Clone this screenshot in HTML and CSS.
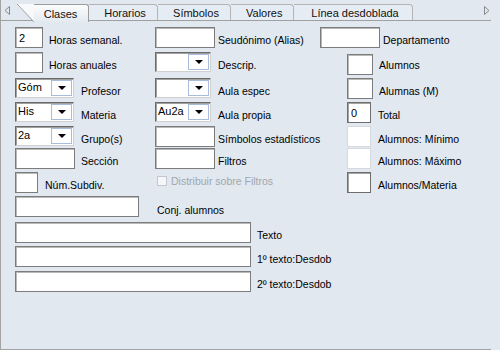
FILE: index.html
```html
<!DOCTYPE html>
<html lang="es">
  <head>
    <meta charset="UTF-8" />
    <title>Clases</title>
    <link rel="stylesheet" href="styles.css">
  </head>
  <body>
    <div class="ventana">
      <div class="pestanas">
        <span class="flecha izq"><svg width="7" height="9" viewBox="0 0 7 9"><path d="M5.5 0.5 L1 4.5 L5.5 8.5 Z" fill="none" stroke="#8a8a8a"/></svg></span>
        <div class="tab sel"><i class="sesgo"></i><span>Clases</span></div>
        <div class="tab">Horarios</div>
        <div class="tab">Símbolos</div>
        <div class="tab">Valores</div>
        <div class="tab">Línea desdoblada</div>
        <span class="flecha der"><svg width="7" height="9" viewBox="0 0 7 9"><path d="M1.5 0.5 L6 4.5 L1.5 8.5 Z" fill="none" stroke="#8a8a8a"/></svg></span>
      </div>

      <main class="form">
        <!-- fila 1 -->
        <div class="celda"><input class="fld w28" value="2"><label class="l6">Horas semanal.</label></div>
        <div class="celda"><input class="fld w60"><label>Seudónimo (Alias)</label></div>
        <div class="celda"><input class="fld w60"><label>Departamento</label></div>

        <!-- fila 2 -->
        <div class="celda"><input class="fld w28"><label class="l6">Horas anuales</label></div>
        <div class="celda"><div class="combo w56"><span class="cv"></span><span class="bot"></span></div><label class="l7">Descrip.</label></div>
        <div class="celda sangria baja2"><input class="fld w26"><label class="l6">Alumnos</label></div>

        <!-- fila 3 -->
        <div class="celda"><div class="combo w59"><span class="cv">Góm</span><span class="bot"></span></div><label class="l7">Profesor</label></div>
        <div class="celda"><div class="combo w56"><span class="cv"></span><span class="bot"></span></div><label class="l7">Aula espec</label></div>
        <div class="celda sangria"><input class="fld w26"><label class="l6">Alumnas (M)</label></div>

        <!-- fila 4 -->
        <div class="celda"><div class="combo w59"><span class="cv">His</span><span class="bot"></span></div><label class="l7">Materia</label></div>
        <div class="celda"><div class="combo w56"><span class="cv">Au2a</span><span class="bot"></span></div><label class="l7">Aula propia</label></div>
        <div class="celda sangria"><input class="fld w24 oscuro" value="0"><label class="l8">Total</label></div>

        <!-- fila 5 -->
        <div class="celda"><div class="combo w59"><span class="cv">2a</span><span class="bot"></span></div><label class="l7">Grupo(s)</label></div>
        <div class="celda"><input class="fld w60"><label>Símbolos estadísticos</label></div>
        <div class="celda sangria"><input class="fld w24 claro"><label class="l8">Alumnos: Mínimo</label></div>

        <!-- fila 6 -->
        <div class="celda"><input class="fld w60"><label class="l6">Sección</label></div>
        <div class="celda"><input class="fld w60"><label>Filtros</label></div>
        <div class="celda sangria"><input class="fld w24 claro"><label class="l8">Alumnos: Máximo</label></div>

        <!-- fila 7 -->
        <div class="celda"><input class="fld w23"><label class="l7">Núm.Subdiv.</label></div>
        <div class="celda"><span class="check"></span><label class="gris">Distribuir sobre Filtros</label></div>
        <div class="celda sangria"><input class="fld w24 oscuro"><label class="l8">Alumnos/Materia</label></div>

        <!-- fila 8 -->
        <div class="celda"><input class="fld w124"></div>
        <div class="celda baja"><label class="l2">Conj. alumnos</label></div>
        <div class="celda"></div>

        <!-- textos -->
        <div class="celda ancha"><input class="fld w236"><label class="l6">Texto</label></div>
        <div class="celda ancha"><input class="fld w236"><label class="l6">1º texto:Desdob</label></div>
        <div class="celda ancha"><input class="fld w236"><label class="l6">2º texto:Desdob</label></div>
      </main>
    </div>
  </body>
</html>
```

FILE: styles.css
```css
      body {
        margin: 0;
        background-color: #e1e8f0;
        font-family: "Liberation Sans", Arial, sans-serif;
        font-size: 10.5px;
        color: #000;
      }

      .ventana {
        width: 490px;
        height: 349px;
        border-left: 1px solid #a3a3a3;
        border-bottom: 1px solid #a3a3a3;
      }

      /* pestañas */
      .pestanas {
        display: flex;
        align-items: flex-end;
        height: 20px;
        border-bottom: 1px solid #a0a0a0;
        font-size: 11px;
        color: #111;
      }

      .flecha {
        align-self: center;
        display: flex;
        height: 9px;
      }

      .flecha.izq {
        width: 13px;
        padding-left: 3px;
        margin-top: 1px;
      }

      .flecha.der {
        margin-left: auto;
        margin-right: 1px;
        margin-top: 1px;
      }

      .tab {
        height: 15px;
        line-height: 16px;
        padding: 0 11px 0 15px;
        border-top: 1px solid #b4b4b4;
        border-right: 1px solid #b4b4b4;
        border-top-right-radius: 4px;
        background-color: #e6ecf3;
        text-align: center;
      }

      .tab:nth-child(3) { width: 42px; }
      .tab:nth-child(4) { width: 46px; }
      .tab:nth-child(5) { width: 36px; }
      .tab:nth-child(6) { width: 92px; }

      .tab.sel {
        display: flex;
        height: 17px;
        padding: 0;
        border: none;
        margin-bottom: -1px;
        background: none;
        position: relative;
        z-index: 1;
      }

      .sesgo {
        width: 17px;
        height: 18px;
        background: linear-gradient(to top right, transparent calc(50% - 0.6px), #9c9c9c 50%, #f7f9fb calc(50% + 0.8px));
      }

      .tab.sel span {
        width: 53px;
        height: 17px;
        line-height: 19px;
        padding-right: 1px;
        border-top: 1px solid #9c9c9c;
        border-right: 1px solid #9c9c9c;
        border-top-right-radius: 3px;
        background: linear-gradient(#fbfcfd, #e4eaf1);
        text-align: center;
      }

      /* formulario */
      .form {
        display: grid;
        grid-template-columns: 140px 165px 1fr;
        grid-template-rows: 25px 26px 24px 24px 22px 24px 24px 26px 24px 25px 24px;
        padding: 6px 0 0 14px;
      }

      .celda {
        display: flex;
        align-items: flex-start;
        white-space: nowrap;
      }

      .celda label {
        margin-left: 3px;
        padding-top: 7px;
      }

      .celda.sangria {
        padding-left: 27px;
      }

      .celda.baja2 {
        padding-top: 2px;
      }

      .celda.baja2 label {
        padding-top: 5px;
      }

      .celda.ancha {
        grid-column: 1 / 4;
      }

      .celda.baja label {
        padding-top: 8px;
      }

      .l2 { margin-left: 2px !important; }
      .l6 { margin-left: 6px !important; }
      .l7 { margin-left: 7px !important; }
      .l8 { margin-left: 7px !important; }

      .fld {
        box-sizing: border-box;
        height: 21px;
        margin: 0;
        padding: 0 3px;
        border: 1px solid #7c7c7c;
        box-shadow: inset 1px 1px 0 #b9b9b9;
        background-color: #fff;
        font: inherit;
        font-size: 11px;
        outline: none;
      }

      .fld.oscuro {
        border-color: #6e6e6e;
        box-shadow: inset 1px 1px 0 #a4a4a4;
      }

      .fld.claro {
        border-color: #d6d9dd;
        box-shadow: none;
      }

      .w23 { width: 23px; }
      .w24 { width: 24px; }
      .w26 { width: 26px; }
      .w28 { width: 28px; }
      .w60 { width: 60px; }
      .w124 { width: 124px; }
      .w236 { width: 236px; }

      .combo {
        box-sizing: border-box;
        display: flex;
        height: 20px;
        margin-top: 0;
        border: 1px solid;
        border-color: #6a6a6a #d0d0d0 #d0d0d0 #6a6a6a;
        box-shadow: inset 1px 1px 0 #a0a0a0;
        background-color: #fff;
      }

      .w56 { width: 56px; }
      .w59 { width: 59px; }

      .cv {
        flex: 1;
        padding: 2px 0 0 2px;
        font-size: 11px;
      }

      .bot {
        box-sizing: border-box;
        width: 21px;
        height: 16px;
        margin: 1px 1px 0 0;
        border: 1px solid #a9bcdc;
        background-color: #fff;
        position: relative;
      }

      .bot::after {
        content: "";
        position: absolute;
        left: 6px;
        top: 5px;
        border-left: 4px solid transparent;
        border-right: 4px solid transparent;
        border-top: 4px solid #000;
      }

      .check {
        box-sizing: border-box;
        width: 10px;
        height: 10px;
        margin: 4px 0 0 2px;
        border: 1px solid #c4c8ce;
        background-color: #f4f6f9;
      }

      .celda label.gris {
        color: #a2a6ab;
        padding-top: 3px;
        margin-left: 4px;
      }
```
